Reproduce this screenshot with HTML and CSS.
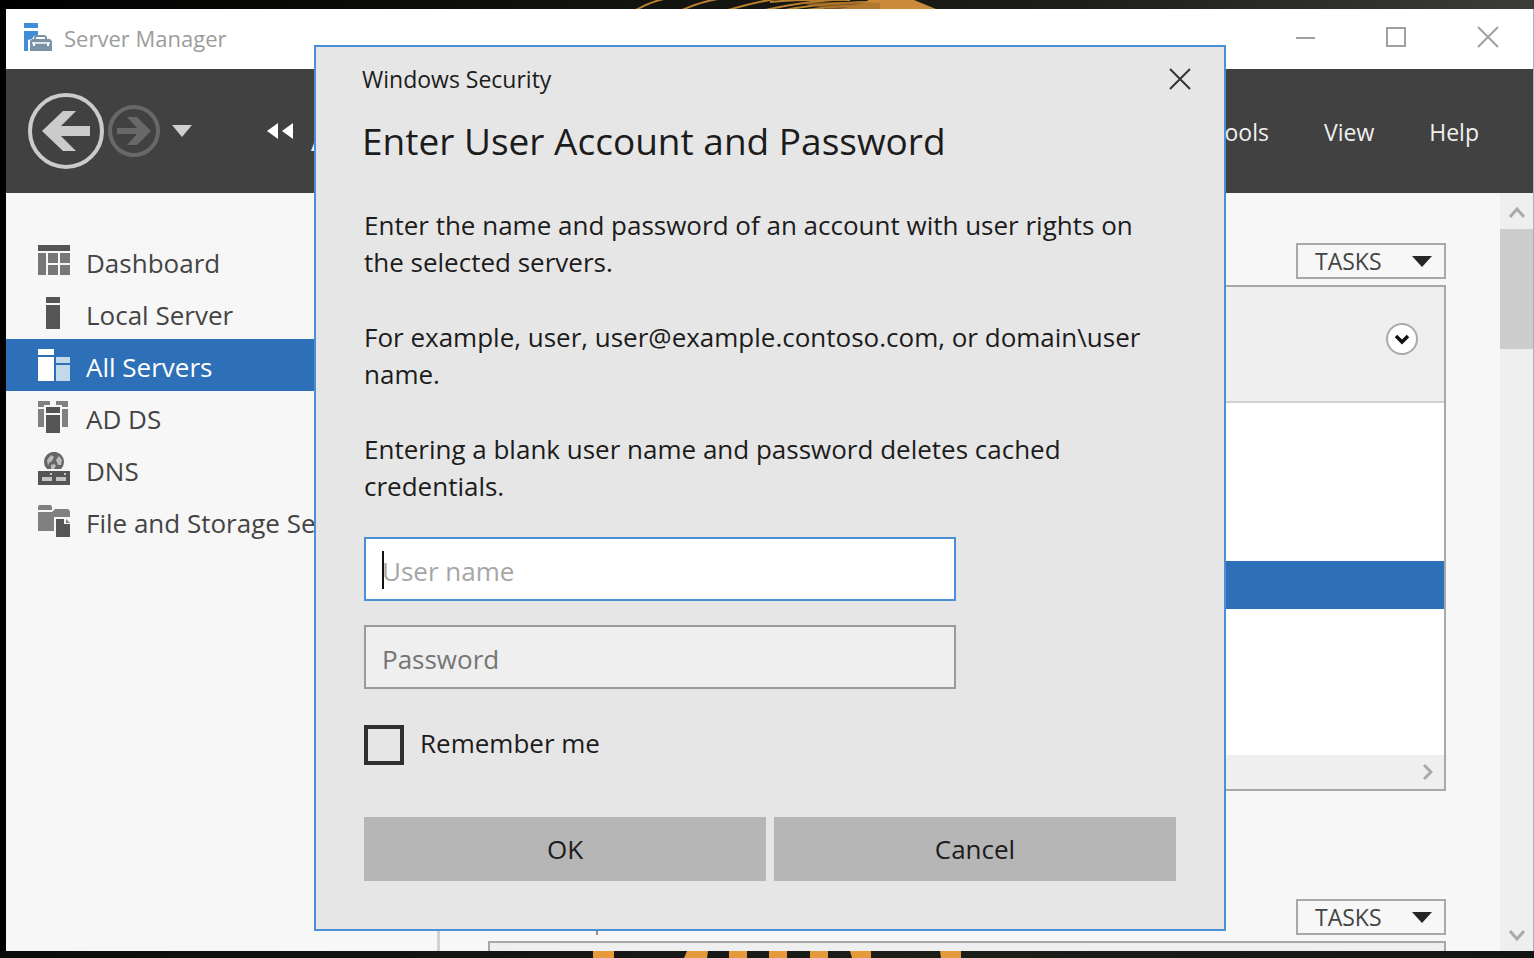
FILE: index.html
```html
<!DOCTYPE html>
<html lang="en">
<head>
<meta charset="utf-8">
<title>Server Manager</title>
<link rel="stylesheet" href="styles.css">
</head>
<body>
<div class="desktop">
  <svg class="wall wall-top" viewBox="0 0 1534 9" preserveAspectRatio="xMinYMin slice" aria-hidden="true">
    <g fill="none" stroke="#b9802f" stroke-width="2">
      <path d="M636 10Q650 2 664-1"/><path d="M682 10Q700 2 718-1"/><path d="M728 10Q752 3 775-1"/>
      <path d="M765 10Q800 2 845-1"/><path d="M785 10Q820 3 870 2"/><path d="M806 10Q840 5 880 5"/><path d="M770 2Q800-1 850 0"/>
    </g>
    <path fill="#c98a3a" d="M840 9Q870 2 868 0H914L936 9Z"/>
    <path fill="#a8712a" opacity=".7" d="M800 3Q850 1 880 3V9H830Z"/>
  </svg>

  <div class="window">
    <header class="titlebar">
      <svg class="app-icon" viewBox="0 0 30 30" aria-hidden="true">
        <path fill="#3f8ed6" d="M2 1H16V6H2ZM2 9H16V13L12 14L10 17L6 18V29H2Z"/>
        <path fill="none" stroke="#7a93a5" stroke-width="2" d="M13 18V16Q13 14 15 14H22Q24 14 24 16V18"/>
        <path fill="#7a93a5" d="M10 17H28L30 19V29H8V19Z"/>
        <path stroke="#fff" stroke-width="1.5" fill="none" d="M10 21H28"/>
        <path fill="#fff" d="M11 21H13V24H11ZM25 21H27V24H25Z"/>
      </svg>
      <span class="app-name">Server Manager</span>
      <div class="controls">
        <button aria-label="Minimize"><svg viewBox="0 0 22 22"><path d="M3 12H22"/></svg></button>
        <button aria-label="Maximize"><svg viewBox="0 0 22 22"><path d="M2 2H20V20H2Z"/></svg></button>
        <button aria-label="Close"><svg viewBox="0 0 22 22"><path d="M1 1L21 21M21 1L1 21"/></svg></button>
      </div>
    </header>

    <nav class="toolbar">
      <button class="nav-btn" aria-label="Back">
        <svg width="76" height="76" viewBox="0 0 76 76"><circle cx="38" cy="38" r="36" fill="none" stroke="#cbcbcb" stroke-width="4"/><path fill="#cbcbcb" d="M14 38L35 18H48L33 33H62V43H33L48 58H35Z"/></svg>
      </button>
      <button class="nav-btn forward" aria-label="Forward">
        <svg width="52" height="52" viewBox="0 0 52 52"><circle cx="26" cy="26" r="24" fill="none" stroke="#686868" stroke-width="4"/><path fill="#686868" d="M43 26L29 12H19L29 23H9V29H29L19 40H29Z"/></svg>
      </button>
      <button class="nav-btn history" aria-label="History">
        <svg width="22" height="14" viewBox="0 0 22 14"><path fill="#cfcfcf" d="M1 1H21L11 13Z"/></svg>
      </button>
      <button class="nav-btn collapse" aria-label="Collapse">
        <svg width="28" height="18" viewBox="0 0 28 18"><path fill="#fff" d="M12 1V17L1 9ZM27 1V17L16 9Z"/></svg>
      </button>
      <span class="crumb">All</span>
      <div class="menu">
        <button>Tools</button><button>View</button><button>Help</button>
      </div>
    </nav>

    <div class="body">
      <ul class="sidebar">
        <li><a href="#"><svg viewBox="0 0 34 34"><path fill="#555" d="M1 1H33V7H1Z"/><path fill="#777" d="M1 9H9V31H1ZM11 9H21V19H11ZM23 9H33V19H23ZM11 21H21V31H11ZM23 21H33V31H23Z"/></svg>Dashboard</a></li>
        <li><a href="#"><svg viewBox="0 0 34 34"><path fill="#555" d="M9 1H23V7H9ZM9 9H23V33H9Z"/></svg>Local Server</a></li>
        <li><a href="#" class="active"><svg viewBox="0 0 34 34"><path fill="#fff" d="M1 1H17V7H1ZM1 9H17V33H1Z"/><path fill="#c2d9ec" d="M19 9H33V15H19ZM19 17H33V33H19Z"/></svg>All Servers</a></li>
        <li><a href="#"><svg viewBox="0 0 34 34"><path fill="#808080" d="M1 1H13V5H7V7H1ZM1 9H7V27H1ZM19 1H31V7H25V5H19ZM25 9H31V27H25Z"/><path fill="#555" d="M9 7H23V13H9ZM9 15H23V33H9Z"/></svg>AD DS</a></li>
        <li><a href="#"><svg viewBox="0 0 34 34"><path fill="#666" d="M10 17A10 10 0 1 1 24 17Z"/><path fill="#bcbcbc" d="M10 8L14 3L17 5L15 9L12 11L11 14ZM19 8L22 4L25 8L24 13L21 13ZM14 13L17 12L19 14L17 17H14Z"/><path fill="#555" d="M1 19H33V33H1Z"/><path fill="#c4c4c4" d="M5 25H15V29H5ZM19 25H29V29H19ZM13 21H15V23H13ZM27 21H29V23H27Z"/></svg>DNS</a></li>
        <li><a href="#"><svg viewBox="0 0 34 34"><path fill="#808080" d="M2 1H14L15 3V6H1V3ZM1 8H15L18 5H31L33 7V13H17V27H1Z"/><path fill="#555" d="M19 15H27V20H33V33H19Z"/><path fill="#808080" d="M29 15L33 19H29Z"/></svg>File and Storage Services</a></li>
      </ul>

      <main class="main">
        <section class="tile">
          <div class="tile-head"><button class="tasks">TASKS<svg viewBox="0 0 20 11"><path fill="#262626" d="M0 0H20L10 11Z"/></svg></button></div>
          <div class="panel">
            <div class="filter">
              <button class="expand" aria-label="Expand"><svg viewBox="0 0 16 12"><path fill="none" stroke="#111" stroke-width="3.5" d="M2 3L8 9L14 3"/></svg></button>
            </div>
            <div class="list"><div class="row-selected"></div></div>
            <div class="hscroll"><svg viewBox="0 0 10 16"><path d="M1 1L8 8L1 15"/></svg></div>
          </div>
        </section>
        <section class="tile">
          <div class="tile-head"><span class="count-divider"></span><button class="tasks">TASKS<svg viewBox="0 0 20 11"><path fill="#262626" d="M0 0H20L10 11Z"/></svg></button></div>
          <div class="panel"><div class="filter"></div></div>
        </section>
      </main>

      <div class="vscroll">
        <svg viewBox="0 0 16 14"><path d="M1 11L8 3L15 11"/></svg>
        <div class="thumb"></div>
        <svg class="down" viewBox="0 0 16 14"><path d="M1 3L8 11L15 3"/></svg>
      </div>
    </div>
  </div>

  <svg class="wall wall-bottom" viewBox="0 0 1534 7" preserveAspectRatio="xMinYMin slice" aria-hidden="true">
    <path fill="#e59a3c" d="M593 0H614V7H593ZM687 0H708L707 7H684ZM729 0H747V7H729ZM769 0H787V7H769ZM810 0H828V7H810ZM850 0H871V7H852ZM940 0H961V7H941Z"/>
  </svg>

  <form class="dialog" role="dialog" aria-labelledby="dlg-title">
    <div class="dialog-bar">
      <span>Windows Security</span>
      <button type="button" class="dialog-close" aria-label="Close"><svg viewBox="0 0 22 22"><path d="M1 1L21 21M21 1L1 21"/></svg></button>
    </div>
    <h1 id="dlg-title">Enter User Account and Password</h1>
    <div class="copy">
      <p>Enter the name and password of an account with user rights on the selected servers.</p>
      <p>For example, user, user@example.contoso.com, or domain\user name.</p>
      <p>Entering a blank user name and password deletes cached credentials.</p>
    </div>
    <div class="fields">
      <div class="field focused"><input type="text" aria-label="User name" placeholder="User name"><span class="caret"></span></div>
      <div class="field"><input type="password" aria-label="Password" placeholder="Password"></div>
    </div>
    <label class="remember"><input type="checkbox"><span>Remember me</span></label>
    <div class="actions"><button type="button">OK</button><button type="button">Cancel</button></div>
  </form>
</div>
</body>
</html>
```
FILE: styles.css
```css
* { box-sizing: border-box; }
body {
  margin: 0;
  background: #0c0d0b;
  font-family: "Open Sans", "Noto Sans", sans-serif;
  color: #444;
}
button, input { font: inherit; color: inherit; }
button { background: none; border: 0; padding: 0; }
svg { display: block; flex: none; }

.desktop {
  position: relative;
  display: flex;
  flex-direction: column;
  height: 100vh;
  overflow: hidden;
  background: linear-gradient(90deg, #000 0, #12130f 40%, #1d1e1a 70%, #3c3d3a 100%);
}
.wall { width: 100%; }
.wall-top { height: 9px; }
.wall-bottom { height: 7px; background: linear-gradient(90deg, #0b0b0b, #1c1e1a 60%, #141512); }

.window {
  flex: 1;
  min-height: 0;
  display: flex;
  flex-direction: column;
  margin-left: 6px;
  border-right: 1px solid #b0b0b0;
  background: #f7f7f7;
}
.titlebar {
  display: flex;
  align-items: center;
  height: 60px;
  padding: 0 34px 4px 16px;
  background: #fff;
  color: #9c9c9c;
  font-size: 22px;
}
.app-icon { width: 30px; height: 30px; margin-right: 12px; }
.app-name { padding-top: 2px; }
.controls { display: flex; gap: 70px; margin-left: auto; }
.controls svg, .dialog-close svg { width: 22px; height: 22px; fill: none; stroke: #a0a0a0; stroke-width: 2; }

.toolbar {
  display: flex;
  align-items: center;
  height: 124px;
  padding: 0 54px 0 22px;
  background: #414141;
  color: #f0f0f0;
}
.forward { margin-left: 4px; }
.history { margin-left: 11px; }
.collapse { margin-left: 73px; }
.crumb { margin-left: 17px; padding-top: 12px; font-size: 36px; }
.menu { display: flex; gap: 55px; margin-left: auto; padding-top: 2px; font-size: 23px; }

.body { flex: 1; min-height: 0; display: flex; }
.sidebar {
  width: 431px;
  margin: 0;
  padding: 42px 0 0;
  list-style: none;
  font-size: 26px;
}
.sidebar a {
  display: flex;
  align-items: center;
  gap: 15px;
  height: 52px;
  padding: 4px 0 0 31px;
  color: #444;
  text-decoration: none;
  white-space: nowrap;
}
.sidebar svg { width: 34px; height: 34px; margin-bottom: 4px; }
.sidebar a.active { background: #2d70b7; color: #fff; }

.main {
  flex: 1;
  overflow: hidden;
  border-left: 3px solid #d2d2d2;
  padding: 50px 54px 0 48px;
}
.tile { margin-bottom: 108px; }
.tile-head { display: flex; margin-bottom: 6px; }
.tasks {
  display: flex;
  align-items: center;
  justify-content: space-between;
  width: 150px;
  height: 36px;
  margin-left: auto;
  padding: 0 12px 0 17px;
  border: 2px solid #a8a8a8;
  font-size: 23px;
}
.tasks svg { width: 20px; height: 11px; }
.count-divider { width: 2px; margin-left: 108px; background: #a58e7c; }
.panel { border: 2px solid #a8a8a8; background: #fff; }
.filter {
  display: flex;
  align-items: center;
  justify-content: flex-end;
  height: 116px;
  padding: 0 26px 10px 0;
  border-bottom: 2px solid #d0d0d0;
  background: #efefef;
}
.expand {
  display: grid;
  place-items: center;
  width: 32px;
  height: 32px;
  border: 2px solid #aaa;
  border-radius: 50%;
  background: #fff;
}
.expand svg { width: 16px; height: 12px; }
.list { height: 352px; padding-top: 158px; }
.row-selected { height: 48px; background: #2d70b7; }
.hscroll {
  display: flex;
  align-items: center;
  justify-content: flex-end;
  height: 34px;
  padding-right: 11px;
  background: #efefef;
}
.hscroll svg { width: 10px; height: 16px; }
.hscroll svg, .vscroll svg { fill: none; stroke: #aaa; stroke-width: 3; }

.vscroll {
  display: flex;
  flex-direction: column;
  align-items: center;
  width: 33px;
  padding: 13px 0 9px;
  background: #efefef;
}
.vscroll svg { width: 16px; height: 14px; }
.thumb { width: 100%; height: 120px; margin-top: 9px; background: #cdcdcd; }
.vscroll .down { margin-top: auto; }

.dialog {
  position: absolute;
  top: 45px;
  left: 314px;
  width: 912px;
  padding: 16px 48px 48px;
  border: 2px solid #4a90d9;
  background: #e6e6e6;
  color: #1c1c1c;
  font-size: 26px;
}
.dialog-bar {
  display: flex;
  align-items: center;
  justify-content: space-between;
  height: 32px;
  margin: 0 -15px 0 -2px;
  font-size: 23px;
}
.dialog-close svg { stroke: #333; }
.dialog h1 {
  margin: 20px 0 0 -2px;
  font-size: 37px;
  font-weight: 400;
  line-height: 52px;
}
.copy { margin-top: 40px; line-height: 37px; }
.copy p { margin: 0 0 38px; }
.fields { display: grid; gap: 24px; width: 592px; margin-top: -6px; }
.field { position: relative; }
.field input {
  width: 100%;
  height: 64px;
  padding: 4px 16px 0;
  border: 2px solid #9a9a9a;
  border-radius: 0;
  outline: 0;
  background: #efefef;
}
.field input::placeholder { color: #757575; opacity: 1; }
.focused input { border-color: #4a90d9; background: #fff; }
.focused input::placeholder { color: #a6a6a6; }
.caret { position: absolute; left: 18px; top: 14px; width: 2px; height: 38px; background: #111; }
.remember { display: flex; align-items: center; gap: 16px; margin-top: 36px; height: 40px; }
.remember span { padding-bottom: 4px; }
.remember input {
  appearance: none;
  width: 40px;
  height: 40px;
  margin: 0;
  border: 4px solid #303030;
}
.actions { display: grid; grid-template-columns: 1fr 1fr; gap: 8px; margin-top: 52px; }
.actions button { height: 64px; background: #b6b6b6; }
```
